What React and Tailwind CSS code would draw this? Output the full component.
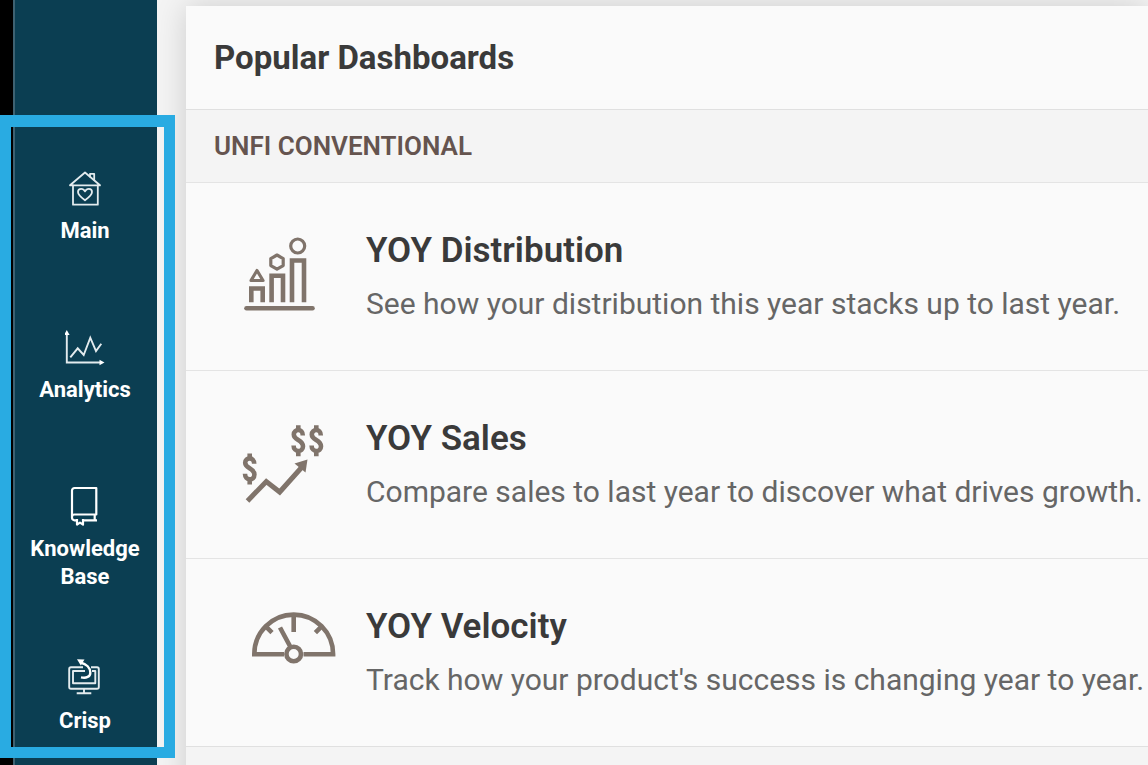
import React from 'react';

const HouseIcon = () => (
  <svg viewBox="0 0 40 40" className="w-10 h-10" fill="none" stroke="#e3ebee" strokeWidth="1.8" strokeLinecap="round" strokeLinejoin="round" aria-hidden="true">
    <path d="M5 17.3 20 4.5l15 12.8z" />
    <path d="M8 17.5v19.2h24.8V17.5" />
    <path d="M25 8.5V5.8h4.2v6" />
    <path d="M20 32.3c-3.6-2.6-7-5.2-7-8.2 0-2 1.4-3.3 3.2-3.3 1.7 0 3 1 3.8 2.6.8-1.6 2.1-2.6 3.8-2.6 1.8 0 3.2 1.3 3.2 3.3 0 3-3.4 5.6-7 8.2z" />
  </svg>
);

const AnalyticsIcon = () => (
  <svg viewBox="0 0 40 40" className="w-10 h-10" fill="none" stroke="#e3ebee" strokeWidth="1.9" aria-hidden="true">
    <path d="M1.8 6v29.5H36" />
    <path d="M-1 8 1.8 3l2.8 5zM34.5 32.7l5 2.8-5 2.8z" fill="#fff" stroke="none" />
    <path d="m5.3 30.3 7.4-9 6 6.7 6.6-17.3 5.7 13.3 5.3-7.3" />
  </svg>
);

const BookIcon = () => (
  <svg viewBox="0 0 40 40" className="w-10 h-10" fill="none" stroke="#fff" strokeWidth="2.2" strokeLinejoin="round" aria-hidden="true">
    <path d="M12 34.3H9.5A2.5 2.5 0 0 1 7 31.8V4.5A2.5 2.5 0 0 1 9.5 2h21.8v26.5H9.5A2.5 2.5 0 0 0 7 31" />
    <path d="M29.7 28.5v5.8M18 34.3h14" />
    <path d="M12 33v5.6l3-2 3 2V33" />
  </svg>
);

const CrispIcon = () => (
  <svg viewBox="0 0 40 40" className="w-10 h-10" fill="none" stroke="#e3ebee" strokeWidth="1.9" strokeLinejoin="round" aria-hidden="true">
    <path d="M18 9.2H6A1.8 1.8 0 0 0 4.2 11v18A1.8 1.8 0 0 0 6 30.8h26a1.8 1.8 0 0 0 1.8-1.8V11A1.8 1.8 0 0 0 32 9.2h-6" />
    <path d="M20 13H8v12.2h22.3V13H27" />
    <path d="M19 31v4M11.7 35.2h14.6" />
    <path d="M15.5 4.5c6 1.5 9.8 5.5 9.8 10.2 0 4-4 5.8-9.3 4.6" stroke="#fff" strokeWidth="2.4" />
    <path d="m12 1.3 7.5.3-3.7 5.8z" fill="#fff" stroke="none" />
  </svg>
);

const DistributionIcon = () => (
  <svg viewBox="0 0 96 96" className="w-24 h-24 shrink-0" fill="none" stroke="#80746b" strokeWidth="4.6" aria-hidden="true">
    <path d="M4.5 79.3h66" strokeLinecap="round" />
    <path d="M9.3 73.3V59.5h11.4v13.8M29.6 73.3V46.8H41v26.5M50 73.3V31.5h12v41.8" />
    <g strokeWidth="3.2" strokeLinejoin="round">
      <circle cx="55.7" cy="17" r="7" />
      <path d="m35 26 6.2 3.6v7L35 40.2l-6.2-3.6v-7z" />
      <path d="m15 41.5 6 10H9z" />
    </g>
  </svg>
);

const DOLLAR = 'M4.5-5.2C4.5-12.5-4.5-12-4.5-6.3-4.5-.5 4.7-1 4.7 5.5 4.7 12.2-4.7 12-4.7 4.7M0-15.5v4.5M0 10.5v5';

const SalesIcon = () => (
  <svg viewBox="0 0 96 96" className="w-24 h-24 shrink-0" fill="none" stroke="#80746b" strokeWidth="4.6" aria-hidden="true">
    <path d={DOLLAR} transform="translate(7.7 52)" />
    <path d={DOLLAR} transform="translate(56.3 23.7)" />
    <path d={DOLLAR} transform="translate(74.3 23.7)" />
    <path d="m5.5 84 18.8-19.5L37.7 75 60 50" strokeWidth="5" />
    <path d="m65.500 42.500-2 13-11-9z" fill="#80746b" stroke="none" />
  </svg>
);

const VelocityIcon = () => (
  <svg viewBox="0 0 96 96" className="w-24 h-24 shrink-0" fill="none" stroke="#80746b" strokeWidth="4.6" aria-hidden="true">
    <path d="M42 49.3H12.3a39.4 39.7 0 0 1 78.8 0H61.5" />
    <path d="M51.7 9v18M24 21.7l6 6M79.4 21.7l-6 6M38 22.5l10.2 19" />
    <circle cx="51.7" cy="49" r="7.3" />
  </svg>
);

const navItems = [
  { icon: HouseIcon, label: 'Main' },
  { icon: AnalyticsIcon, label: 'Analytics' },
  { icon: BookIcon, label: 'Knowledge Base' },
  { icon: CrispIcon, label: 'Crisp' }
];

const dashboards = [
  {
    icon: DistributionIcon,
    title: 'YOY Distribution',
    text: 'See how your distribution this year stacks up to last year.'
  },
  {
    icon: SalesIcon,
    title: 'YOY Sales',
    text: 'Compare sales to last year to discover what drives growth.'
  },
  {
    icon: VelocityIcon,
    title: 'YOY Velocity',
    text: "Track how your product's success is changing year to year."
  }
];

const Sidebar = () => (
  <nav className="w-36 shrink-0 bg-[#0b3e52] shadow-[inset_2px_0_0_#3e6272] pt-[168px]">
    <ul>
      {navItems.map((item) => {
        const Icon = item.icon;
        return (
          <li key={item.label} className="min-h-[159px] pb-[67px]">
            <a href="#" className="flex flex-col items-center gap-[9px] px-3 text-center text-[22px] leading-7 font-bold text-white">
              <Icon />
              <span>{item.label}</span>
            </a>
          </li>
        );
      })}
    </ul>
  </nav>
);

const DashboardRow = ({ icon: Icon, title, text }) => (
  <li className="border-t border-[#e4e4e4]">
    <a href="#" className="flex gap-7 pt-[46px] pb-[45px] pl-14">
      <Icon />
      <div className="whitespace-nowrap">
        <h3 className="text-[35px] leading-[44px] font-semibold text-[#3a3a3a]">{title}</h3>
        <p className="mt-[13px] text-[30px] leading-9 text-[#666666]">{text}</p>
      </div>
    </a>
  </li>
);

const App = () => {
  return (
    <div className="relative flex h-screen overflow-hidden bg-[#f4f4f4] font-['Roboto',sans-serif]">
      <div className="w-[13px] shrink-0 bg-black" />
      <Sidebar />

      <main className="flex-1 min-w-0 pl-[29px] pt-1.5">
        <section className="min-h-screen bg-[#fafafa] shadow-[0_0_30px_rgba(0,0,0,0.16)]">
          <h1 className="pt-8 pb-[31px] pl-7 text-[33px] leading-10 font-bold text-[#3a3a3a]">
            Popular Dashboards
          </h1>
          <h2 className="border-t border-[#e0e0e0] bg-[#f4f4f4] py-5 pl-7 text-[26px] leading-8 font-semibold text-[#65544f]">
            UNFI CONVENTIONAL
          </h2>
          <ul>
            {dashboards.map((item) => (
              <DashboardRow key={item.title} {...item} />
            ))}
          </ul>
          <div className="h-[72px] border-t border-[#e0e0e0] bg-[#f4f4f4]" />
        </section>
      </main>

      {/* Highlight frame over the navigation */}
      <div className="pointer-events-none absolute left-0 top-[115px] h-[643px] w-[175px] border-[11px] border-t-[12px] border-[#29abe2]" />
    </div>
  );
};

export default App;
